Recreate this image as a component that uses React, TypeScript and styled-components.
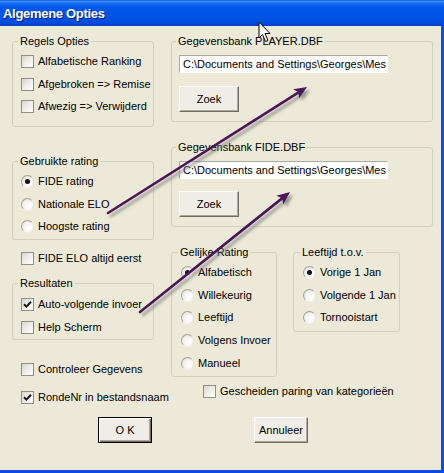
import React from 'react';
import styled, { createGlobalStyle, css } from 'styled-components';

const Global = createGlobalStyle`
  html, body { margin: 0; padding: 0; background: #ECE9D8; }
  body { font-family: "Liberation Sans", Arial, sans-serif; font-size: 11px; color: #000; }
  * { box-sizing: border-box; }
`;

const Window = styled.div`
  position: relative;
  width: 444px;
  height: 473px;
  display: flex;
  flex-direction: column;
  overflow: hidden;
  background: #ECE9D8;
`;

const TitleBar = styled.div`
  height: 26px;
  flex: none;
  display: flex;
  align-items: center;
  padding-left: 3px;
  background: linear-gradient(
    to bottom,
    #0A5AE6 0%,
    #3C8AF6 6%,
    #1468F2 14%,
    #0057EC 30%,
    #0054E6 65%,
    #004ADB 88%,
    #003FC6 100%
  );
`;

const TitleText = styled.span`
  font-family: "Liberation Sans", Arial, sans-serif;
  font-weight: bold;
  font-size: 13px;
  letter-spacing: -0.3px;
  color: #fff;
  text-shadow: 1px 1px 0 #0A1883;
`;

const Client = styled.div`
  flex: 1;
  display: flex;
  flex-direction: column;
  padding: 9px 0 0 12px;
  border-right: 3px solid #0B4FE2;
  border-bottom: 3px solid #0A4CDF;
`;

const Columns = styled.div`
  display: flex;
  align-items: flex-start;
  gap: 17px;
`;

const Column = styled.div<{ $w: number }>`
  width: ${p => p.$w}px;
  display: flex;
  flex-direction: column;
  align-items: flex-start;
`;

const Group = styled.fieldset<{ $h: number; $w?: number; $mt?: number; $pt?: number; $pl?: number }>`
  margin: ${p => p.$mt ?? 0}px 0 0 0;
  padding: ${p => p.$pt ?? 2}px 0 0 ${p => p.$pl ?? 8}px;
  border: 1px solid #D0D0BF;
  border-radius: 3px;
  width: ${p => (p.$w ? `${p.$w}px` : '100%')};
  height: ${p => p.$h}px;
  min-inline-size: 0;
  flex: none;
`;

const Legend = styled.legend`
  padding: 0 2px;
  margin-left: -3px;
  font-size: 11px;
  line-height: 13px;
  color: #000;
`;

const OptionRow = styled.label<{ $h?: number; $mt?: number; $ml?: number }>`
  display: flex;
  align-items: center;
  gap: 4px;
  height: ${p => p.$h ?? 22.75}px;
  margin-top: ${p => p.$mt ?? 0}px;
  margin-left: ${p => p.$ml ?? 0}px;
  white-space: nowrap;
  font-size: 11px;
  line-height: 13px;
`;

const Box = styled.span`
  width: 13px;
  height: 13px;
  flex: none;
  border: 1px solid #8F8F88;
  background: linear-gradient(135deg, #D6D5CC 0%, #ECEBE5 45%, #FFFFFF 100%);
  display: flex;
  align-items: center;
  justify-content: center;
`;

const Radio = styled.span<{ $on?: boolean }>`
  width: 13px;
  height: 13px;
  flex: none;
  border-radius: 50%;
  border: 1px solid;
  border-color: #A3A39C #E6E5DE #F4F3EE #A3A39C;
  background: radial-gradient(circle at 65% 65%, #FFFFFF 0%, #F6F5F1 45%, #DCDBD3 100%);
  display: flex;
  align-items: center;
  justify-content: center;
  ${p =>
    p.$on &&
    css`
      &::after {
        content: '';
        width: 5px;
        height: 5px;
        border-radius: 50%;
        background: #111;
      }
    `}
`;

const Check = () => (
  <svg width="9" height="9" viewBox="0 0 9 9">
    <path d="M1 4.2 L3.4 6.6 L8 1.8" fill="none" stroke="#161616" strokeWidth="2" />
  </svg>
);

const CheckOption: React.FC<{ label: string; checked?: boolean; h?: number; mt?: number; ml?: number }> = ({
  label,
  checked,
  h,
  mt,
  ml,
}) => (
  <OptionRow $h={h} $mt={mt} $ml={ml}>
    <Box>{checked && <Check />}</Box>
    <span>{label}</span>
  </OptionRow>
);

const RadioOption: React.FC<{ label: string; on?: boolean }> = ({ label, on }) => (
  <OptionRow>
    <Radio $on={on} />
    <span>{label}</span>
  </OptionRow>
);

const PathField = styled.div`
  width: 209px;
  height: 18px;
  background: #fff;
  border: 1px solid;
  border-color: #A9A89F #FFFFFF #FFFFFF #A9A89F;
  padding-left: 3px;
  display: flex;
  align-items: center;
  font-size: 11px;
  white-space: nowrap;
  overflow: hidden;
`;

const Button = styled.button<{ $w: number; $mt?: number; $primary?: boolean }>`
  width: ${p => p.$w}px;
  height: 26px;
  margin-top: ${p => p.$mt ?? 0}px;
  padding: 0;
  font-family: "Liberation Sans", Arial, sans-serif;
  font-size: 11px;
  color: #000;
  background: #EFEDE5;
  border: 1px solid;
  border-color: #FFFFFF #716F64 #716F64 #FFFFFF;
  box-shadow: inset -1px -1px 0 #ACA899;
  flex: none;
  ${p =>
    p.$primary &&
    css`
      border-color: #000;
      box-shadow: inset 1px 1px 0 #fff, inset -1px -1px 0 #716F64, inset -2px -2px 0 #ACA899;
    `}
`;

const Inline = styled.div`
  display: flex;
  align-items: flex-start;
  gap: 16px;
  margin-top: 19px;
`;

const ButtonRow = styled.div`
  display: flex;
  gap: 102px;
  margin-top: 13px;
  padding-left: 86px;
`;

const Overlay = styled.svg`
  position: absolute;
  left: 0;
  top: 0;
  pointer-events: none;
`;

const Arrow: React.FC<{ x1: number; y1: number; x2: number; y2: number }> = ({ x1, y1, x2, y2 }) => {
  const dx = x2 - x1;
  const dy = y2 - y1;
  const len = Math.hypot(dx, dy);
  const ux = dx / len;
  const uy = dy / len;
  const hl = 13;
  const hw = 5.5;
  const bx = x2 - ux * hl;
  const by = y2 - uy * hl;
  const px = -uy;
  const py = ux;
  const pts = `${x2},${y2} ${bx + px * hw},${by + py * hw} ${bx + ux * 3},${by + uy * 3} ${bx - px * hw},${by - py * hw}`;
  return (
    <g filter="url(#shadow)">
      <line x1={x1} y1={y1} x2={bx + ux * 4} y2={by + uy * 4} stroke="#4B1659" strokeWidth="2.6" strokeLinecap="round" />
      <polygon points={pts} fill="#4B1659" />
    </g>
  );
};

export default function App() {
  return (
    <>
      <Global />
      <Window>
        <TitleBar>
          <TitleText>Algemene Opties</TitleText>
        </TitleBar>
        <Client>
          <Columns>
            <Column $w={142}>
              <Group $h={92}>
                <Legend>Regels Opties</Legend>
                <CheckOption label="Alfabetische Ranking" />
                <CheckOption label="Afgebroken => Remise" />
                <CheckOption label="Afwezig => Verwijderd" />
              </Group>
              <Group $h={85} $mt={28}>
                <Legend>Gebruikte rating</Legend>
                <RadioOption label="FIDE rating" on />
                <RadioOption label="Nationale ELO" />
                <RadioOption label="Hoogste rating" />
              </Group>
              <CheckOption label="FIDE ELO altijd eerst" h={14} mt={11} ml={9} />
              <Group $h={63} $mt={12} $pt={3}>
                <Legend>Resultaten</Legend>
                <CheckOption label="Auto-volgende invoer" checked />
                <CheckOption label="Help Scherm" />
              </Group>
              <CheckOption label="Controleer Gegevens" h={14} mt={22} ml={9} />
              <CheckOption label="RondeNr in bestandsnaam" checked h={14} mt={14} ml={9} />
            </Column>
            <Column $w={262}>
              <Group $h={87} $pt={7} $pl={7}>
                <Legend>Gegevensbank PLAYER.DBF</Legend>
                <PathField>C:\Documents and Settings\Georges\Mes</PathField>
                <Button $w={60} $mt={13}>Zoek</Button>
              </Group>
              <Group $h={86} $mt={19} $pt={7} $pl={7}>
                <Legend>Gegevensbank FIDE.DBF</Legend>
                <PathField>C:\Documents and Settings\Georges\Mes</PathField>
                <Button $w={60} $mt={12}>Zoek</Button>
              </Group>
              <Inline>
                <Group $w={106} $h={131} $pl={9}>
                  <Legend>Gelijke Rating</Legend>
                  <RadioOption label="Alfabetisch" on />
                  <RadioOption label="Willekeurig" />
                  <RadioOption label="Leeftijd" />
                  <RadioOption label="Volgens Invoer" />
                  <RadioOption label="Manueel" />
                </Group>
                <Group $w={107} $h={86} $pl={9}>
                  <Legend>Leeftijd t.o.v.</Legend>
                  <RadioOption label="Vorige 1 Jan" on />
                  <RadioOption label="Volgende 1 Jan" />
                  <RadioOption label="Tornooistart" />
                </Group>
              </Inline>
              <CheckOption label="Gescheiden paring van kategorieën" h={14} mt={7} ml={32} />
            </Column>
          </Columns>
          <ButtonRow>
            <Button $w={54} $primary>O K</Button>
            <Button $w={54}>Annuleer</Button>
          </ButtonRow>
        </Client>
        <Overlay width="444" height="473" viewBox="0 0 444 473">
          <defs>
            <filter id="shadow" x="-20%" y="-20%" width="140%" height="140%">
              <feDropShadow dx="3" dy="3" stdDeviation="1.6" floodColor="#7A7A74" floodOpacity="0.75" />
            </filter>
          </defs>
          <Arrow x1={108} y1={213} x2={307} y2={87} />
          <Arrow x1={140} y1={312} x2={290} y2={192} />
          <path
            d="M259 22 L259 38 L262.5 34.5 L265.5 41.5 L268 40.5 L265 33.5 L270 33.5 Z"
            fill="#fff"
            stroke="#000"
            strokeWidth="1"
            strokeLinejoin="miter"
          />
        </Overlay>
      </Window>
    </>
  );
}
